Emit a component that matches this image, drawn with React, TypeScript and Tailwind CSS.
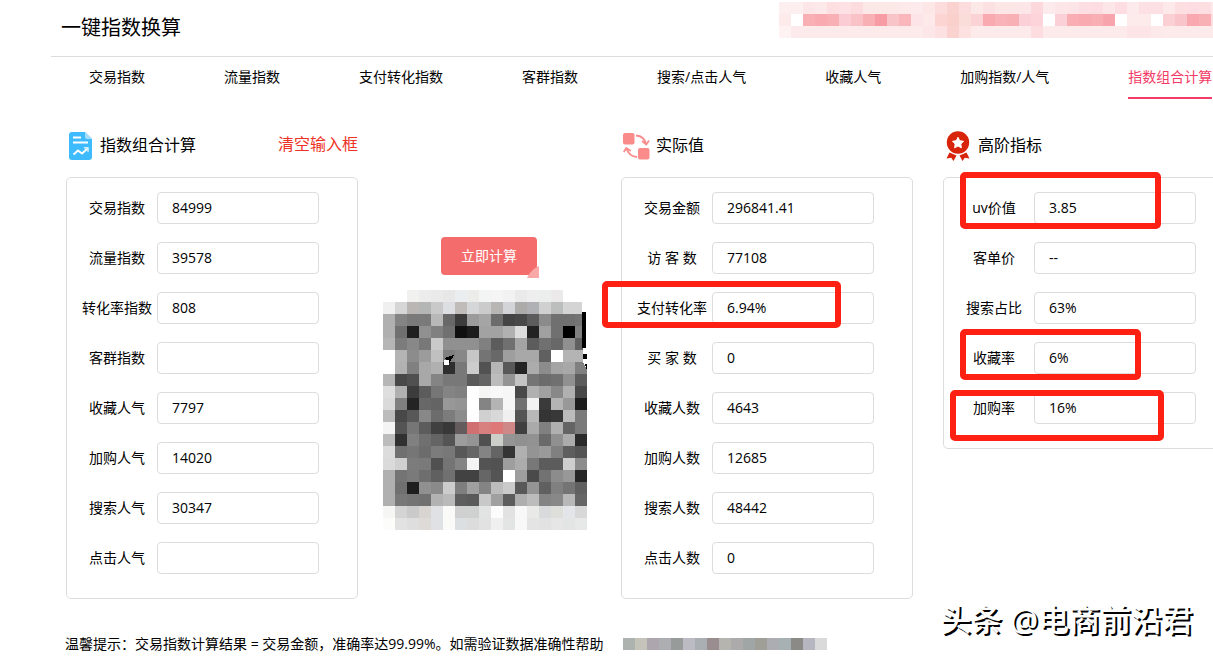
import type { ReactNode } from 'react';

const tabs = [
  '交易指数',
  '流量指数',
  '支付转化指数',
  '客群指数',
  '搜索/点击人气',
  '收藏人气',
  '加购指数/人气',
  '指数组合计算',
];

type Row = { id: string; label: string; value: string };

const inputRows: Row[] = [
  { id: 'trade-index', label: '交易指数', value: '84999' },
  { id: 'flow-index', label: '流量指数', value: '39578' },
  { id: 'rate-index', label: '转化率指数', value: '808' },
  { id: 'group-index', label: '客群指数', value: '' },
  { id: 'favorite-index', label: '收藏人气', value: '7797' },
  { id: 'cart-index', label: '加购人气', value: '14020' },
  { id: 'search-index', label: '搜索人气', value: '30347' },
  { id: 'click-index', label: '点击人气', value: '' },
];

const actualRows: Row[] = [
  { id: 'trade-amount', label: '交易金额', value: '296841.41' },
  { id: 'visitors', label: '访 客 数', value: '77108' },
  { id: 'pay-rate', label: '支付转化率', value: '6.94%' },
  { id: 'buyers', label: '买 家 数', value: '0' },
  { id: 'favorite-count', label: '收藏人数', value: '4643' },
  { id: 'cart-count', label: '加购人数', value: '12685' },
  { id: 'search-count', label: '搜索人数', value: '48442' },
  { id: 'click-count', label: '点击人数', value: '0' },
];

const advancedRows: Row[] = [
  { id: 'uv-value', label: 'uv价值', value: '3.85' },
  { id: 'unit-price', label: '客单价', value: '--' },
  { id: 'search-share', label: '搜索占比', value: '63%' },
  { id: 'favorite-rate', label: '收藏率', value: '6%' },
  { id: 'cart-rate', label: '加购率', value: '16%' },
];

// Two digits is a grey level, six digits a full colour, "-" an empty cell
const codeMosaic = [
  '- - f1f1ef ec eaeaea e7 ebeef0 ececea f3f4f4 f5 f2 ea edeeed eceeee ebe9e9 - -',
  'f0 d6 b9b6b4 b4b6b5 c9 dddee2 bfbcba d5d6d8 cb b8b6b4 d3d4d8 adabaa afb1b4 d0 bcbebd d4 d4',
  'b0 84 7a 7a b8 68 3c 9b a5 6c 44 48 5c 8b 70 70 74',
  'b0 70 1f 90 80 70 10 1c a2 a2 b0 dc 22 a0 70 00 80',
  'b6 7c 88 78 ca 90 90 90 80 5c 70 a4 5c 70 68 90 60',
  'ff b4 8c 9c c0 80 88 c6 74 68 9e a8 a8 60 ff b4 b4',
  'ff b2 80 a8 b0 2e 78 cc 52 b6 58 24 ac 8c a4 a8 80',
  'b6 48 50 a8 84 78 78 5a 64 bc 94 c4 74 6c 70 90 5c',
  'de b0 3c 5c 76 84 80 fe f6f6f4 f8 f6 48 b0 a0 88 b0 48',
  'da 80 24 68 64 98 94 ff 84 b4 f6 70 f2 3a b4 98 1c',
  'bc 48 58 88 6c 7c 8c fe d0 d8 f0 54 b8 34 38 bc 7a',
  'f4 54 76 5c 40 38 645c5c d07070 d88080 de7878 ce8888 40 aa 80 b0 64 7a',
  'bc 30 80 70 64 54 9c 94 50 ccceca 94 90 92 6a 90 ac 2a',
  'dc 70 76 6c 7c 78 58 66 84 64 34 b0 94 9a 80 5e 54',
  'da d0 7c 7a 50 74 84 f4 54 52 9e ac 78 5c 5c ce 8c',
  'b0 74 7a 6e 60 70 42 42 66 54 ff 9e 4a 72 8c 98 26',
  'b0 70 1e 90 8a cc 7e a0 84 bc ca 58 94 60 80 74 60',
  'b0 78 74 70 b2 ba 5e 5a c8 a0 5c ae bc 84 88 b8 66',
  'f6f6f4 d4 ca d7d4d1 dfe1e4 fafaf8 d0 cfd1d1 e1e4e3 fc e2 f8 e9eae8 d8dadb dededb e3e5e8 d8',
  'fcfcfa e2 de dddad7 dfe1e4 fafaf8 dcdfe2 dc e2 f0 e2e5e4 f8 e4 e2 e6 e2e5e4 e7e9e8',
];

const bannerMosaic = [
  'fdeef0 fdeef0 fde6e8 fde8ea fddfe2 fde1e4 fddce0 fde8e8 fde8e8 fde8e8 fde8ea fdeaec fde6e6 fcdcdc fad2d0 fcdcdc fde8e8 fde0e2 fde6e6 fde6e6 fde6e8 fcd8dc fdeaec fde6e8 fde4e6 fddfe3 fddde1 fde6e8 fddde1 fdeaec fde0e3 fde0e3 fde8ea fddfe2 fddde1 fddfe2 fde8ea',
  'fdeaeb ffffff f9b0b5 f9aab0 f9b0b5 fbccd4 f9c2c6 f9b0b5 f79ca4 f9c4c8 f9b6bb fde4e8 fde8ea fcd4d2 f9d0cc fadcd8 fbd2d6 f9aab0 f9b2b8 f9b0b5 fbd0d6 fcd4da ffffff fbd0d6 f9aeb4 f9aab0 f9aeb4 f7a4ac ffffff fdeaeb fdeaeb ffffff fbd0d4 f9c4ca f9a8b0 f9b0b5 fddfe2',
  'fef2f3 fdeaec fdeaeb fdeaeb fdeaeb fdeaeb fdeaeb fdeaeb fdeaeb fdeaeb fdeaeb fdeaeb fde6e8 fce0e2 fad2d0 fde1e0 fdeaea fdeaeb fdeaeb fdeaeb fdeaeb fddde0 fdeaeb fdeaeb fdeaeb fdeaeb fdeaeb fdeaeb fdeaeb fde4e6 fde4e6 fde8ea fdeaeb fdeaeb fdeaeb fdeaeb fdeaeb',
];

const contactMosaic = [
  'adb3ae c4c4bb ada6ae adaeb2 979c9b bcbac2 aaafb3 998d90 b6b4af adaaab a0a5a6 9f9f98 acadb3 a7b1b4 8c8a86 b5b6bf dadada',
];

const toColor = (cell: string) => (cell.length === 2 ? `#${cell}${cell}${cell}` : `#${cell}`);

function Mosaic({
  rows,
  width,
  label,
  className = '',
  children,
}: {
  rows: string[];
  width: number;
  label: string;
  className?: string;
  children?: ReactNode;
}) {
  const height = rows.length * 12;
  return (
    <svg
      width={width}
      height={height}
      viewBox={`0 0 ${width} ${height}`}
      shapeRendering="crispEdges"
      role="img"
      aria-label={label}
      className={`shrink-0 ${className}`}
    >
      {rows.map((row, y) =>
        row.split(' ').map((cell, x) =>
          cell === '-' ? null : (
            <rect key={`${x}-${y}`} x={x * 12} y={y * 12} width="12" height="12" fill={toColor(cell)} />
          )
        )
      )}
      {children}
    </svg>
  );
}

function ReportIcon() {
  return (
    <svg width="24" height="28" viewBox="0 0 24 28" fill="none" aria-hidden="true">
      <path d="M3 0h13l7 7v18a3 3 0 0 1-3 3H3a3 3 0 0 1-3-3V3a3 3 0 0 1 3-3z" fill="#3dbbfd" />
      <path d="M16 0l7 7h-5a2 2 0 0 1-2-2z" fill="#a5defd" />
      <path d="M4 5.500h8M4 10.500h15" stroke="#fff" strokeWidth="2" />
      <path d="M4.500 22.500l4.500-4 4 3 5-4.500" stroke="#fff" strokeWidth="2" />
      <path d="M15 15.800h4v4" stroke="#fff" strokeWidth="1.200" />
    </svg>
  );
}

function SwapIcon() {
  return (
    <svg width="27" height="28" viewBox="0 0 27 28" fill="none" aria-hidden="true">
      <rect x="0" y="1" width="11.500" height="11.500" rx="2" fill="#f98c8b" />
      <rect x="15" y="16" width="11.500" height="11.500" rx="2" fill="#f98c8b" />
      <path d="M13 3.500C19 4 22 7 23 12" stroke="#f98c8b" strokeWidth="1.800" />
      <path d="M19 9l4.300 3.500L26 8.500" stroke="#f98c8b" strokeWidth="1.800" />
      <path d="M14 25C8 24.500 5 21.500 3.500 16.500" stroke="#f98c8b" strokeWidth="1.800" />
      <path d="M.8 20l2.500-4 4.500 3" stroke="#f98c8b" strokeWidth="1.800" />
    </svg>
  );
}

function MedalIcon() {
  return (
    <svg width="24" height="30" viewBox="0 0 24 30" aria-hidden="true">
      <path d="M3.500 21.500l7 3L7.500 30l-2.300-3.200L.5 27.500z" fill="#d9240c" />
      <path d="M20.500 21.500l-7 3 3 5.500 2.300-3.200 4.700.7z" fill="#d9240c" />
      <circle cx="12" cy="11.500" r="12" fill="#fff" />
      <circle cx="12" cy="11.500" r="11.200" fill="#d9240c" />
      <path
        d="M12 6.300l1.700 3.400 3.800.6-2.700 2.700.6 3.800-3.400-1.800-3.400 1.800.6-3.800-2.700-2.700 3.800-.6z"
        fill="#fff"
        stroke="#fff"
        strokeWidth="1"
        strokeLinejoin="round"
      />
    </svg>
  );
}

function Panel({ rows, readOnly = false, children }: { rows: Row[]; readOnly?: boolean; children?: ReactNode }) {
  return (
    <div className="relative flex w-[292px] flex-col gap-[18px] rounded-[5px] border border-[#dcdcdc] pt-[14px] pb-6 pl-[10px]">
      {rows.map((row) => (
        <div key={row.id} className="flex items-center">
          <label htmlFor={row.id} className="w-20 shrink-0 text-center whitespace-nowrap">
            {row.label}
          </label>
          <input
            id={row.id}
            type="text"
            defaultValue={row.value}
            readOnly={readOnly}
            className="h-8 w-[162px] rounded border border-[#dcdcdc] bg-white px-[14px] pb-[2px] outline-none"
          />
        </div>
      ))}
      {children}
    </div>
  );
}

// Hand-drawn style frame around a result
function Mark({ className }: { className: string }) {
  return (
    <div className={`pointer-events-none absolute rounded-[5px] border-6 border-[#ff2014] ${className}`}></div>
  );
}

export default function App() {
  return (
    <div className="relative overflow-x-hidden bg-white text-sm text-black font-['Open_Sans','Noto_Sans_CJK_SC',sans-serif]">
      {/* Header */}
      <header className="ml-[51px] flex h-[57px] items-start justify-between border-b border-[#dcdcdc] pl-[10px]">
        <h1 className="pt-[13px] text-xl leading-[30px]">一键指数换算</h1>
        <Mosaic rows={bannerMosaic} width={434} label="banner" className="mt-[2px]" />
      </header>

      {/* Tabs */}
      <nav className="flex gap-[79px] pl-[89px]">
        {tabs.map((tab, i) => (
          <a
            key={tab}
            href="#"
            className={
              i === tabs.length - 1
                ? 'flex h-[42px] shrink-0 items-center border-b-2 border-[#f23b66] whitespace-nowrap text-[#f23b66]'
                : 'flex h-[42px] shrink-0 items-center border-b-2 border-transparent whitespace-nowrap'
            }
          >
            {tab}
          </a>
        ))}
      </nav>

      <main className="flex items-start pt-[31px] pl-[66px]">
        {/* Index inputs */}
        <section className="shrink-0">
          <div className="mb-[15px] flex h-8 items-center pl-[3px]">
            <ReportIcon />
            <h2 className="ml-[7px] pb-[2px] text-base">指数组合计算</h2>
            <button type="button" className="ml-auto cursor-pointer pb-1 text-base text-[#ee3326]">
              清空输入框
            </button>
          </div>
          <Panel rows={inputRows} />
        </section>

        {/* Calculate */}
        <div className="flex min-w-[263px] flex-1 flex-col items-start pt-[107px] pl-[25px]">
          <div className="relative ml-[58px]">
            <button type="button" className="h-[38px] w-24 cursor-pointer rounded bg-[#f56c6c] text-white">
              立即计算
            </button>
            <svg width="12" height="12" viewBox="0 0 12 12" className="absolute -right-[2px] -bottom-[3px]" aria-hidden="true">
              <path d="M12 0v12H0C2 7 7 2 12 0z" fill="#f9a8a8" />
            </svg>
          </div>
          <Mosaic rows={codeMosaic} width={204} label="QR code" className="mt-[15px]">
            <path d="M199 12h5v10h-5zM203 22h1v36h-1zM200 58h4v22l-4-8z" fill="#fff" />
            <path d="M199 22h4v36h-4zM200 64h4v5h-4zM202 74h2v6z" fill="#000" />
            <path d="M61 68l10-3-5 9-2-3z" fill="#000" />
            <path d="M61 70h5v5h-5z" fill="#fff" />
          </Mosaic>
        </div>

        {/* Actual values */}
        <section className="mr-[30px] shrink-0">
          <div className="mb-[15px] flex h-8 items-center pl-[2px]">
            <SwapIcon />
            <h2 className="ml-[6px] pb-[2px] text-base">实际值</h2>
          </div>
          <Panel rows={actualRows} readOnly>
            <Mark className="top-[103px] -left-[20px] h-[47px] w-[239px]" />
          </Panel>
        </section>

        {/* Advanced metrics */}
        <section className="shrink-0">
          <div className="mb-[15px] flex h-8 items-center pl-[3px]">
            <MedalIcon />
            <h2 className="ml-2 pb-[2px] text-base">高阶指标</h2>
          </div>
          <Panel rows={advancedRows} readOnly>
            <Mark className="-top-[6px] left-[16px] h-[57px] w-[201px]" />
            <Mark className="top-[151px] left-[16px] h-[51px] w-[181px]" />
            <Mark className="top-[212px] left-[6px] h-[51px] w-[214px]" />
          </Panel>
        </section>
      </main>

      {/* Tips */}
      <footer className="flex items-center pt-[35px] pb-[2px] pl-[65px]">
        <p className="leading-5 whitespace-nowrap">
          温馨提示：交易指数计算结果 = 交易金额，准确率达99.99%。如需验证数据准确性帮助
        </p>
        <Mosaic rows={contactMosaic} width={204} label="contact" className="ml-[19px]" />
      </footer>

      {/* Watermark */}
      <div className="absolute right-5 bottom-4 text-[31px] leading-[42px] font-medium whitespace-nowrap text-white [text-shadow:2px_2px_0_#000]">
        头条 @电商前沿君
      </div>
    </div>
  );
}
